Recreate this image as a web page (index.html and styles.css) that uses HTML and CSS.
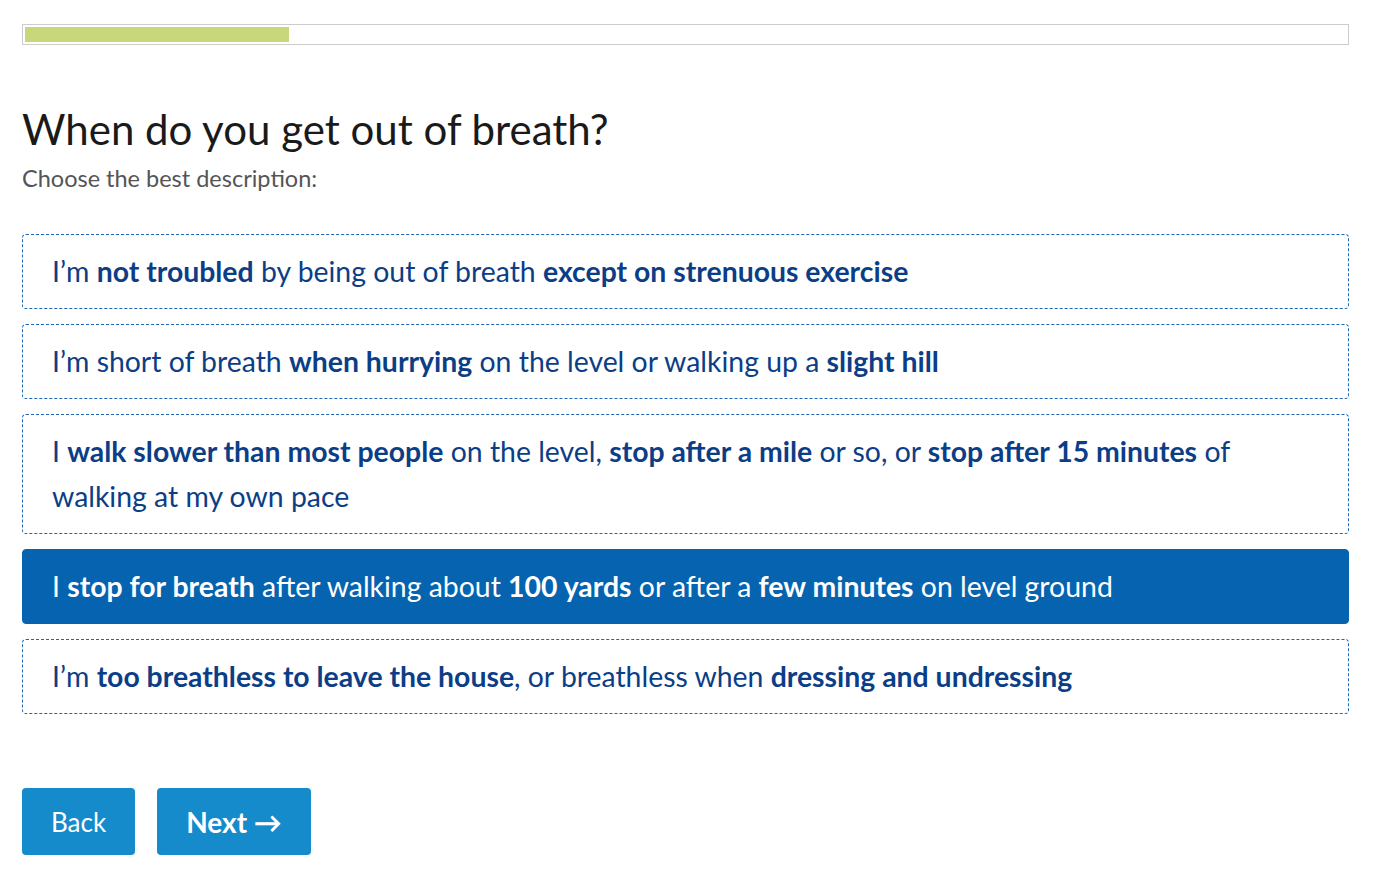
FILE: index.html
```html
<!DOCTYPE html>
<html lang="en">
<head>
<meta charset="utf-8">
<title>When do you get out of breath?</title>
<link rel="stylesheet" href="styles.css">
</head>
<body>
<main class="page">
  <div class="progress"><div class="progress-fill" style="width: 20%"></div></div>
  <h1 class="title">When do you get out of breath?</h1>
  <p class="subtitle">Choose the best description:</p>
  <ul class="options">
    <li class="option">I’m <b>not troubled</b> by being out of breath <b>except on strenuous exercise</b></li>
    <li class="option">I’m short of breath <b>when hurrying</b> on the level or walking up a <b>slight hill</b></li>
    <li class="option">I <b>walk slower than most people</b> on the level, <b>stop after a mile</b> or so, or <b>stop after 15 minutes</b> of walking at my own pace</li>
    <li class="option selected">I <b>stop for breath</b> after walking about <b>100 yards</b> or after a <b>few minutes</b> on level ground</li>
    <li class="option">I’m <b>too breathless to leave the house</b>, or breathless when <b>dressing and undressing</b></li>
  </ul>
  <div class="actions">
    <button class="btn btn-back">Back</button>
    <button class="btn btn-next">Next →</button>
  </div>
</main>
</body>
</html>
```
FILE: styles.css
```css
* { box-sizing: border-box; }
html, body { margin: 0; padding: 0; background: #fff; }
body { font-family: "Lato", "Noto Sans", sans-serif; }
.page { padding: 24px 24px 0 22px; }
.progress {
  height: 21px;
  border: 1px solid #cccccc;
  padding: 2px;
}
.progress-fill { height: 100%; background: #c8d77a; }
.title {
  margin: 60px 0 0;
  font-size: 42px;
  font-weight: 400;
  line-height: 48px;
  color: #1a1a1a;
}
.subtitle {
  margin: 10px 0 0;
  font-size: 23.5px;
  line-height: 30px;
  color: #555555;
}
.options {
  list-style: none;
  margin: 41px 0 0;
  padding: 0;
  display: flex;
  flex-direction: column;
  gap: 15px;
}
.option {
  border: 1px dashed #1d66b4;
  border-radius: 4px;
  padding: 14px 29px;
  font-size: 28.4px;
  line-height: 45px;
  color: #0b3e86;
}
.option b { font-weight: 700; }
.option.selected {
  background: #0563b0;
  border: 1px solid #0563b0;
  color: #ffffff;
}
.actions {
  margin-top: 74px;
  display: flex;
  gap: 22px;
}
.btn {
  font-family: inherit;
  height: 67px;
  border: none;
  border-radius: 4px;
  background: #168bcb;
  color: #fff;
}
.btn-back { font-size: 26px; padding: 0 29px; }
.btn-next { font-size: 28px; font-weight: 700; padding: 0 29px; }
```
